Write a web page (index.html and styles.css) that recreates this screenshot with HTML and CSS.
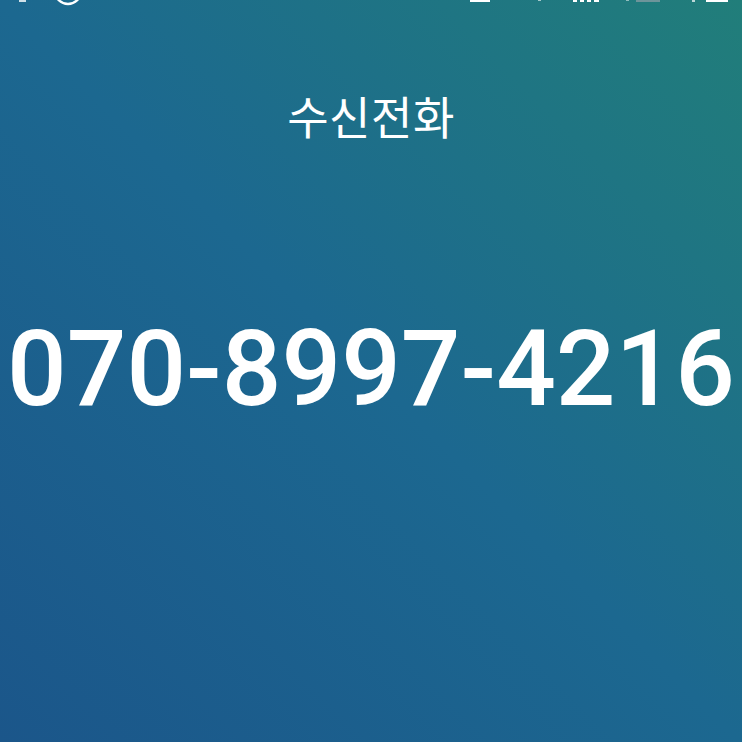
FILE: index.html
```html
<!DOCTYPE html>
<html>
  <head>
    <meta charset="UTF-8">
    <title>수신전화</title>
	<link rel="stylesheet" href="styles.css">
  </head>
  <body>

	<div id="screen">

	<div id="status">
		<svg class="status-left" width="120" height="8" viewBox="0 0 120 8">
			<rect x="19" y="0" width="7" height="2" fill="#ffffff" opacity="0.8"/>
			<circle cx="68" cy="-9" r="13" fill="none" stroke="#ffffff" stroke-width="2.4"/>
		</svg>
		<svg class="status-right" width="290" height="8" viewBox="0 0 290 8">
			<rect x="30" y="0" width="20" height="2" fill="#ffffff"/>
			<rect x="98" y="0" width="3" height="1" fill="#ffffff" opacity="0.6"/>
			<rect x="133" y="0" width="4" height="2" fill="#ffffff"/>
			<rect x="140" y="0" width="4" height="2" fill="#ffffff"/>
			<rect x="147" y="0" width="4" height="2" fill="#ffffff"/>
			<rect x="154" y="0" width="5" height="2" fill="#ffffff"/>
			<rect x="186" y="0" width="3" height="1" fill="#ffffff" opacity="0.5"/>
			<rect x="196" y="0" width="24" height="2" fill="#8fa0a6" opacity="0.7"/>
			<rect x="252" y="0" width="3" height="2" fill="#ffffff" opacity="0.7"/>
			<rect x="266" y="0" width="22" height="2" fill="#ffffff"/>
		</svg>
	</div>

	<div id="title">수신전화</div>

	<div id="number">070-8997-4216</div>

	</div>

  </body>
</html>
```

FILE: styles.css
```css
 * {
	margin: 0px;
	padding: 0px;
	border-style: none;
 }
 html, body {
	height: 100%;
 }
 body {
	background: linear-gradient(45deg, #1b568a 0%, #1c6890 50%, #217e7a 100%);
	color: #ffffff;
	overflow: hidden;
 }
 #screen {
	height: 100%;
	display: flex;
	flex-direction: column;
	align-items: center;
 }
 #status {
	width: 100%;
	height: 8px;
	display: flex;
	justify-content: space-between;
	align-items: flex-start;
 }
 .status-right {
	margin-right: 12px;
 }
 #title {
	margin-top: 78px;
	font-family: "Noto Sans CJK KR", "Noto Sans", sans-serif;
	font-size: 45px;
	line-height: 60px;
	letter-spacing: 0.5px;
 }
 #number {
	margin-top: 159px;
	font-family: Roboto, "Noto Sans", sans-serif;
	font-weight: 500;
	font-size: 105px;
	line-height: 130px;
	white-space: nowrap;
 }
```
